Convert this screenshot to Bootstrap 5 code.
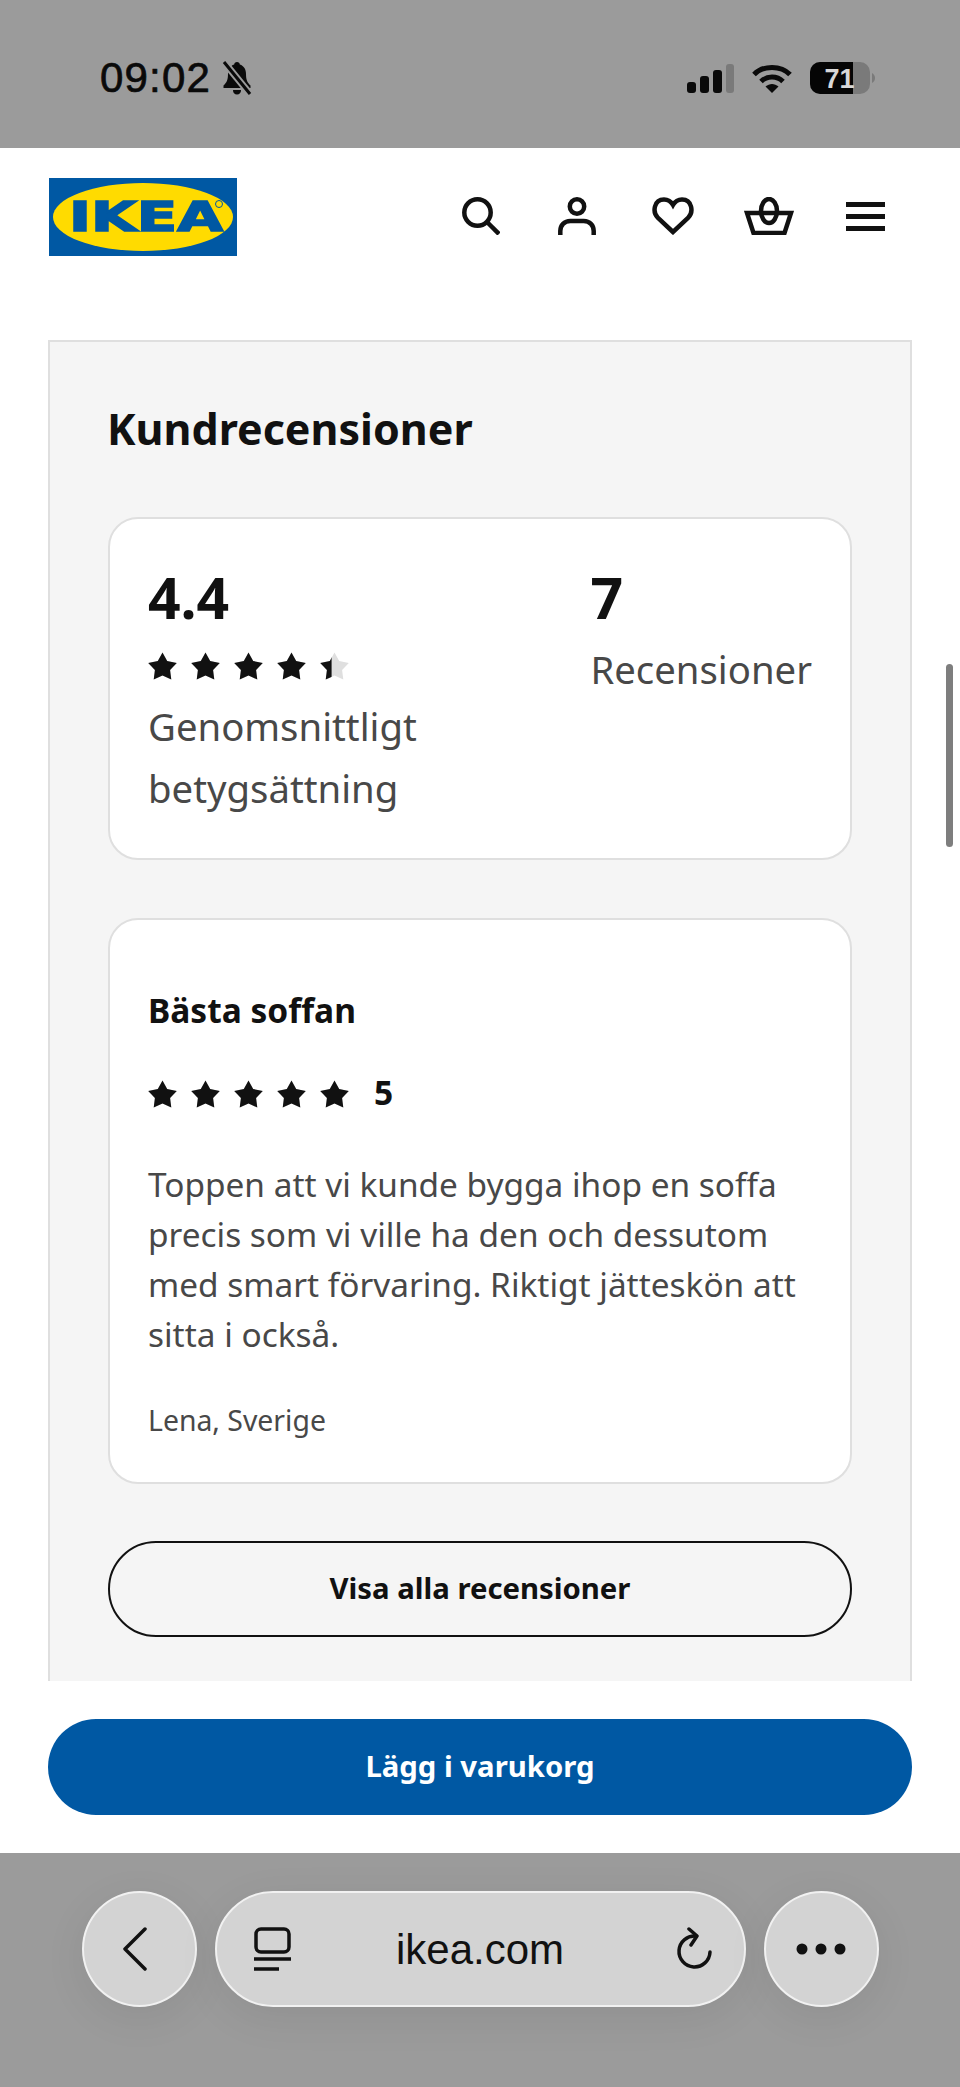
<!DOCTYPE html>
<html lang="sv">
<head>
  <meta charset="UTF-8" />
  <meta name="viewport" content="width=device-width, initial-scale=1.0" />
  <title>IKEA Kundrecensioner</title>
  <link href="https://cdn.jsdelivr.net/npm/bootstrap@5.3.0/dist/css/bootstrap.min.css" rel="stylesheet">
  <style>
    body {
      background: #fff;
      font-family: "Noto Sans", sans-serif;
      color: #111;
      overflow: hidden;
    }
    .phone { height: 2087px; width: 960px; position: relative; overflow: hidden; }
    .status-bar {
      height: 148px;
      background: #9b9b9b;
      padding: 58px 85px 0 100px;
      color: #0a0a0a;
      font-family: "Liberation Sans", sans-serif;
    }
    .status-row { height: 40px; }
    .clock { font-size: 42px; line-height: 40px; letter-spacing: 1.200px; -webkit-text-stroke: .7px #0a0a0a; }
    .clock-bell { gap: 10px; }
    .status-icons { gap: 18px; }
    .site-header { height: 192px; padding: 30px 47px 0 49px; }
    .ikea-logo { width: 188px; height: 78px; display: block; }
    .logo-word { font-family: "DejaVu Sans", sans-serif; font-weight: 700; font-size: 40px; }
    .hdr-icons { height: 76px; }
    .hdr-slot { width: 96px; }
    .review-panel {
      margin: 0 48px;
      height: 1341px;
      background: #f5f5f5;
      border: 2px solid #dfdfdf;
      border-bottom: 0;
      padding: 59px 58px 0;
    }
    .panel-title { font-size: 43px; font-weight: 700; line-height: 56px; margin: 0 0 60px -1px; color: #111; }
    .white-box {
      background: #fff;
      border: 2px solid #dfdfdf;
      border-radius: 30px;
      padding: 0 38px;
    }
    .summary-box { height: 343px; padding-top: 43px; margin-bottom: 58px; }
    .big-num { font-size: 57px; font-weight: 700; line-height: 70px; }
    .stars-row { height: 29px; gap: 14px; }
    .avg-stars { margin-top: 20px; margin-bottom: 14px; }
    .grey-txt { font-size: 38.300px; line-height: 62px; color: #484848; }
    .count-label { margin-top: 6px; }
    .review-box { height: 566px; padding-top: 68px; margin-bottom: 57px; }
    .review-title { font-size: 33.500px; font-weight: 700; line-height: 44px; margin-bottom: 48px; }
    .score-row { gap: 25px; margin-bottom: 50px; }
    .score { font-size: 33.500px; font-weight: 700; line-height: 29px; margin-top: -4px; }
    .review-text { font-size: 33.400px; line-height: 50px; color: #484848; margin: 0 0 41px; }
    .review-author { font-size: 28.400px; line-height: 40px; color: #484848; margin: 0; }
    .all-btn {
      height: 96px; width: 100%;
      border: 2px solid #111;
      border-radius: 48px;
      background: transparent;
      font-size: 29.300px; font-weight: 700; color: #111;
    }
    .cart-bar { background: #fff; height: 172px; padding: 38px 48px 0; }
    .cart-btn {
      height: 96px; width: 100%;
      border: 0; border-radius: 48px;
      background: #0058a3;
      color: #fff; font-size: 29.300px; font-weight: 700;
    }
    .safari-bar {
      height: 234px;
      background: #9b9b9b;
      padding-top: 38px;
      gap: 18px;
      font-family: "Liberation Sans", sans-serif;
    }
    .safari-round, .safari-pill {
      height: 116px;
      background: #d3d3d3;
      border: 2px solid #f1f1f1;
      box-shadow: 0 10px 44px rgba(0,0,0,.07);
    }
    .safari-round { width: 115px; border-radius: 50%; }
    .safari-pill { width: 531px; border-radius: 58px; padding: 0 31px 0 37px; }
    .safari-url { font-size: 42px; color: #111; margin-right: 5px; }
    .back-chevron { margin-right: 9px; }
    .scroll-thumb {
      position: absolute; left: 946px; top: 664px;
      width: 7px; height: 183px; border-radius: 4px; background: #7e7e7e;
    }
  </style>
</head>
<body>

<div class="phone">
  <div class="status-bar d-flex justify-content-between align-items-start">
    <div class="status-row clock-bell d-flex align-items-center">
      <span class="clock">09:02</span>
      <svg width="32" height="34" viewBox="0 0 32 34">
        <path d="M16 1c-1.600 0-2.800 1.200-2.800 2.600C9 5 7 8.500 7 13c0 6-1.400 8.500-4.500 11.500V27h27v-2.500C26.400 21.500 25 19 25 13c0-4.500-2-8-6.200-9.400C18.800 2.200 17.600 1 16 1z" fill="#0a0a0a"/>
        <path d="M12 29h8c0 2.800-1.500 4.500-4 4.500S12 31.800 12 29z" fill="#0a0a0a"/>
        <path d="M3 1l26 32" stroke="#9b9b9b" stroke-width="7"/>
        <path d="M3 1l26 32" stroke="#0a0a0a" stroke-width="3"/>
      </svg>
    </div>
    <div class="status-row status-icons d-flex align-items-center">
      <svg width="47" height="29" viewBox="0 0 47 29">
        <rect x="0" y="18" width="9" height="11" rx="3" fill="#0a0a0a"/>
        <rect x="13" y="12" width="9" height="17" rx="3" fill="#0a0a0a"/>
        <rect x="26" y="6" width="9" height="23" rx="3" fill="#0a0a0a"/>
        <rect x="39" y="0" width="8" height="29" rx="3" fill="#7a7a7a"/>
      </svg>
      <svg width="40" height="29" viewBox="0 0 40 29">
        <path d="M2 10.500C11 1 29 1 38 10.500" fill="none" stroke="#0a0a0a" stroke-width="5"/>
        <path d="M9 17.500c6-6 16-6 22 0" fill="none" stroke="#0a0a0a" stroke-width="5"/>
        <path d="M13.500 22.500c4-3.500 9-3.500 13 0L20 29z" fill="#0a0a0a"/>
      </svg>
      <svg width="65" height="32" viewBox="0 0 65 32">
        <rect x="0" y="0" width="60" height="32" rx="10" fill="#7a7a7a"/>
        <path d="M10 0h33v32H10A10 10 0 0 1 0 22V10A10 10 0 0 1 10 0z" fill="#050505"/>
        <path d="M62 11c2 1 3 3 3 5s-1 4-3 5z" fill="#7a7a7a"/>
        <text x="29.500" y="26" text-anchor="middle" font-family="Liberation Sans, sans-serif" font-weight="700" font-size="27" fill="#d8d8d8">71</text>
      </svg>
    </div>
  </div>

  <div class="site-header d-flex justify-content-between align-items-start">
    <svg class="ikea-logo" viewBox="0 0 188 78">
      <rect width="188" height="78" fill="#0058a3"/>
      <ellipse cx="94" cy="39" rx="90" ry="34" fill="#ffdb00"/>
      <text class="logo-word" x="20" y="53" fill="#0058a3" stroke="#0058a3" stroke-width="1.600" textLength="154" lengthAdjust="spacingAndGlyphs">IKEA</text>
      <circle cx="170" cy="26" r="3.500" fill="none" stroke="#0058a3" stroke-width="1"/>
    </svg>
    <div class="hdr-icons d-flex align-items-center">
      <div class="hdr-slot d-flex justify-content-center">
        <svg width="38" height="38" viewBox="0 0 38 38" fill="none" stroke="#111" stroke-width="4.500">
          <circle cx="15.500" cy="15.500" r="13.200"/><path d="M25 25l12 12"/>
        </svg>
      </div>
      <div class="hdr-slot d-flex justify-content-center">
        <svg width="38" height="38" viewBox="0 0 38 38" fill="none" stroke="#111" stroke-width="4.500">
          <circle cx="19" cy="9.500" r="7.200"/><path d="M2.300 38v-4c0-5.500 4-10 10-10h13.400c6 0 10 4.500 10 10v4"/>
        </svg>
      </div>
      <div class="hdr-slot d-flex justify-content-center">
        <svg width="42" height="38" viewBox="0 0 42 38" fill="none" stroke="#111" stroke-width="4.500">
          <path d="M21 35L6 21C0 15 2 2.500 12 2.500c4 0 7 2 9 5.500 2-3.500 5-5.500 9-5.500 10 0 12 12.500 6 18.500z"/>
        </svg>
      </div>
      <div class="hdr-slot d-flex justify-content-center">
        <svg width="50" height="38" viewBox="0 0 50 38" fill="none" stroke="#111" stroke-width="4.500">
          <path d="M3 16h44l-6.500 20h-31z"/><ellipse cx="25" cy="14" rx="8" ry="12"/>
        </svg>
      </div>
      <div class="hdr-slot d-flex justify-content-center">
        <svg width="39" height="29" viewBox="0 0 39 29" fill="#111">
          <rect y="0" width="39" height="5"/><rect y="12" width="39" height="5"/><rect y="24" width="39" height="5"/>
        </svg>
      </div>
    </div>
  </div>

  <div class="review-panel">
    <h2 class="panel-title">Kundrecensioner</h2>

    <div class="white-box summary-box d-flex justify-content-between">
      <div>
        <div class="big-num">4.4</div>
        <div class="stars-row avg-stars d-flex" id="avgStars"></div>
        <div class="grey-txt">Genomsnittligt<br>betygsättning</div>
      </div>
      <div>
        <div class="big-num">7</div>
        <div class="grey-txt count-label">Recensioner</div>
      </div>
    </div>

    <div class="white-box review-box">
      <div class="review-title">Bästa soffan</div>
      <div class="score-row d-flex align-items-center">
        <div class="stars-row d-flex" id="revStars"></div>
        <span class="score">5</span>
      </div>
      <p class="review-text">Toppen att vi kunde bygga ihop en soffa precis som vi ville ha den och dessutom med smart förvaring. Riktigt jätteskön att sitta i också.</p>
      <p class="review-author">Lena, Sverige</p>
    </div>

    <button type="button" class="btn all-btn">Visa alla recensioner</button>
  </div>

  <div class="cart-bar">
    <button type="button" class="btn cart-btn">Lägg i varukorg</button>
  </div>

  <div class="safari-bar d-flex justify-content-center align-items-start">
    <div class="safari-round d-flex align-items-center justify-content-center">
      <svg class="back-chevron" width="26" height="44" viewBox="0 0 26 44" fill="none" stroke="#111" stroke-width="3.500" stroke-linecap="round" stroke-linejoin="round"><path d="M23 2L3 22l20 20"/></svg>
    </div>
    <div class="safari-pill d-flex align-items-center justify-content-between">
      <svg width="37" height="44" viewBox="0 0 37 44" fill="none" stroke="#111" stroke-width="3.500"><rect x="2" y="2" width="33" height="23" rx="5"/><path d="M0 32h37M0 42h25"/></svg>
      <span class="safari-url">ikea.com</span>
      <svg width="38" height="44" viewBox="0 0 38 44" fill="none" stroke="#111" stroke-width="3.500" stroke-linecap="round" stroke-linejoin="round"><path d="M21 9A15.500 15.500 0 1 0 35 25"/><path d="M14 2l8 7-6 9"/></svg>
    </div>
    <div class="safari-round d-flex align-items-center justify-content-center">
      <svg width="50" height="12" viewBox="0 0 50 12" fill="#111"><circle cx="6" cy="6" r="5.500"/><circle cx="25" cy="6" r="5.500"/><circle cx="44" cy="6" r="5.500"/></svg>
    </div>
  </div>

  <div class="scroll-thumb"></div>
</div>

<script>
  const starPath = "M14.5 .5L19.200 9 28.800 10.900 22.100 18 23.300 27.600 14.500 23.500 5.700 27.600 6.900 18 .2 10.900 9.800 9z";
  let starCount = 0;

  function star(fillPart) {
    // fillPart: share of the star that is black, the rest stays light grey
    const id = "starclip" + (++starCount);
    return `<svg width="29" height="29" viewBox="0 0 29 29">
      <defs><clipPath id="${id}"><rect width="${29 * fillPart}" height="29"/></clipPath></defs>
      <path d="${starPath}" fill="#dfdfdf"/>
      <path clip-path="url(#${id})" d="${starPath}" fill="#111"/>
    </svg>`;
  }
  document.getElementById("avgStars").innerHTML = [1, 1, 1, 1, 0.4].map(star).join("");
  document.getElementById("revStars").innerHTML = [1, 1, 1, 1, 1].map(star).join("");
</script>
<script src="https://cdn.jsdelivr.net/npm/bootstrap@5.3.0/dist/js/bootstrap.bundle.min.js"></script>
</body>
</html>
